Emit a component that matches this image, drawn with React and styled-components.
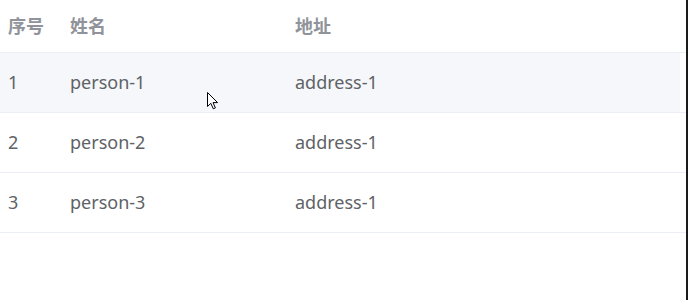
import { Fragment } from 'react';
import styled, { createGlobalStyle } from 'styled-components';

const GlobalStyle = createGlobalStyle`
  body {
    margin: 0;
    background: #fff;
    font-family: "Noto Sans", "Noto Sans CJK SC", sans-serif;
  }
`;

const Frame = styled.div`
  position: relative;
  width: 686px;
  height: 300px;
  border-right: 2px solid #1a1a1a;
  background: #fff;
`;

const Table = styled.div`
  display: grid;
  grid-template-columns: 62px 225px 393px 6px;
`;

const HeadCell = styled.div`
  height: 49px;
  padding: 0 8px 3px;
  display: flex;
  align-items: center;
  font-size: 18px;
  font-weight: 700;
  color: #909399;
  border-bottom: 1px solid #ebeef5;
`;

const Cell = styled.div`
  height: 58px;
  padding: 0 8px 1px;
  display: flex;
  align-items: center;
  font-size: 18px;
  color: #606266;
  background: ${(props) => (props.$hover ? '#f5f7fa' : '#fff')};
  border-bottom: 1px solid #ebeef5;
`;

const Gutter = styled.div`
  border-bottom: 1px solid #ebeef5;
`;

const Cursor = styled.svg`
  position: absolute;
  left: 207px;
  top: 92px;
  width: 12px;
  height: 18px;
`;

const rows = [
  { id: 1, name: 'person-1', address: 'address-1' },
  { id: 2, name: 'person-2', address: 'address-1' },
  { id: 3, name: 'person-3', address: 'address-1' },
];

const App = () => {
  return (
    <>
      <GlobalStyle />
      <Frame>
        <Table>
          <HeadCell>序号</HeadCell>
          <HeadCell>姓名</HeadCell>
          <HeadCell>地址</HeadCell>
          <Gutter />
          {rows.map((row, i) => (
            <Fragment key={row.id}>
              <Cell $hover={i === 0}>{row.id}</Cell>
              <Cell $hover={i === 0}>{row.name}</Cell>
              <Cell $hover={i === 0}>{row.address}</Cell>
              <Gutter />
            </Fragment>
          ))}
        </Table>
        <Cursor viewBox="0 0 12 18">
          <path
            d="M0.5 0.5 L0.5 14.5 L3.8 11.3 L6.3 16.8 L8.4 15.9 L6 10.6 L10.6 10.6 Z"
            fill="#fff"
            stroke="#000"
            strokeWidth="1"
            strokeLinejoin="round"
          />
        </Cursor>
      </Frame>
    </>
  );
};

export default App;
